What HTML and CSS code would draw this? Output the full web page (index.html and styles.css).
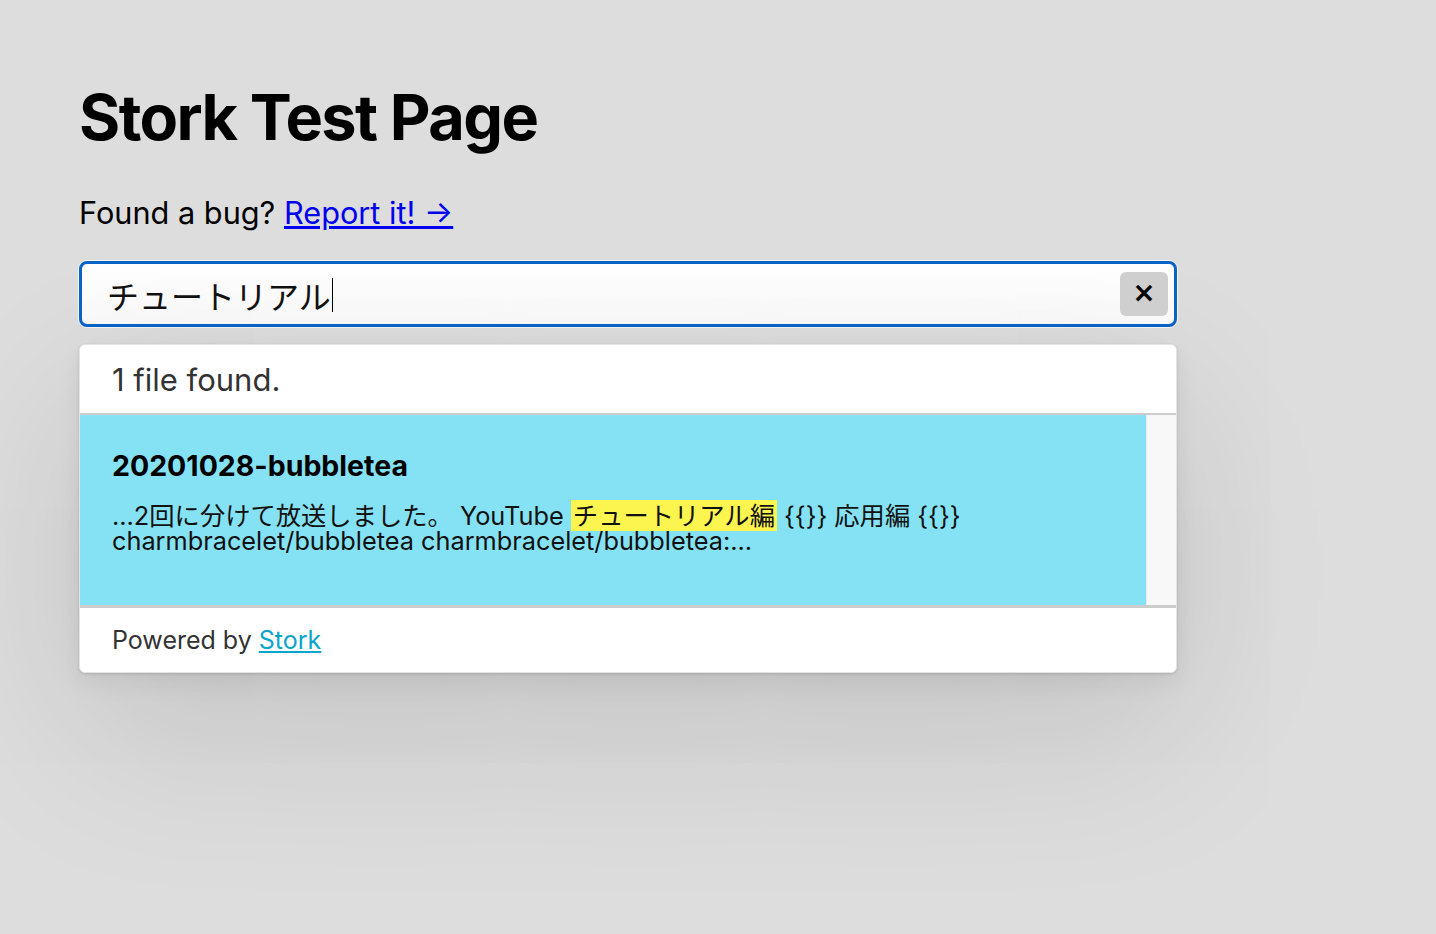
FILE: index.html
```html
<!DOCTYPE html>
<html lang="ja">
<head>
<meta charset="utf-8">
<title>Stork Test Page</title>
<link rel="stylesheet" href="styles.css">
</head>
<body>
<main class="page">
  <h1 class="title">Stork Test Page</h1>
  <p class="bug">Found a bug? <a class="bug-link" href="#">Report it! →</a></p>
  <div class="stork-wrapper">
    <div class="stork-input">
      <span class="input-text">チュートリアル</span><span class="caret"></span>
      <button class="close-button" type="button">×</button>
    </div>
    <div class="stork-output">
      <div class="stork-message">1 file found.</div>
      <div class="stork-results">
        <div class="stork-result">
          <p class="stork-title">20201028-bubbletea</p>
          <p class="stork-excerpt">...2回に分けて放送しました。 YouTube <span class="stork-highlight">チュートリアル編</span> {{}} 応用編 {{}} charmbracelet/bubbletea charmbracelet/bubbletea:...</p>
        </div>
        <div class="scroll-track"></div>
      </div>
      <div class="stork-attribution">Powered by <a class="stork-link" href="#">Stork</a></div>
    </div>
  </div>
</main>
</body>
</html>
```
FILE: styles.css
```css
html, body {
  margin: 0;
  padding: 0;
  background: #dddddd;
}
body {
  min-height: 934px;
  font-family: Inter, "Noto Sans CJK JP", sans-serif;
  color: #000;
}
.page {
  padding: 80px 0 0 79px;
  width: 1098px;
}
.title {
  margin: 0;
  font-size: 63px;
  font-weight: 700;
  line-height: 1.2;
  letter-spacing: -1.6px;
}
.bug {
  margin: 39px 0 0;
  font-size: 30.7px;
  line-height: 1.2;
}
.bug-link {
  color: #0000ee;
}
.stork-wrapper {
  margin-top: 30px;
}
.stork-input {
  box-sizing: border-box;
  height: 66px;
  border: 3px solid #0a64c8;
  border-radius: 8px;
  box-shadow: 0 0 0 1px #f4f4f4;
  background: linear-gradient(to bottom, #ffffff, #fafafa);
  display: flex;
  align-items: center;
  padding: 0 6px 0 25px;
  font-family: "Noto Sans CJK JP", sans-serif;
  font-size: 32px;
  color: #111;
}
.input-text {
  line-height: 1;
  padding-top: 1px;
}
.caret {
  width: 1.5px;
  height: 34px;
  background: #000;
  margin-left: 1px;
  margin-top: 1px;
}
.close-button {
  margin-left: auto;
  width: 48px;
  height: 44px;
  border: 0;
  border-radius: 6px;
  background: #cfcfcf;
  font-family: "DejaVu Sans", sans-serif;
  font-weight: 700;
  font-size: 28px;
  line-height: 1;
  color: #000;
  padding: 0 0 3px;
  display: flex;
  align-items: center;
  justify-content: center;
}
.stork-output {
  margin-top: 17px;
  background: #fff;
  border: 1px solid #e4e4e4;
  border-radius: 6px;
  box-shadow: 0 1px 3px rgba(0,0,0,0.14), 0 10px 24px rgba(0,0,0,0.06), 0 60px 180px rgba(0,0,0,0.12);
  overflow: hidden;
  color: #333;
}
.stork-message {
  height: 68px;
  display: flex;
  align-items: center;
  padding: 0 32px;
  font-size: 31px;
  color: #333;
}
.stork-results {
  display: flex;
  border-top: 2px solid #cccccc;
  border-bottom: 3px solid #cccccc;
}
.stork-result {
  flex: 1;
  height: 190px;
  background: #84e2f4;
  padding: 34px 32px 0;
  box-sizing: border-box;
}
.scroll-track {
  width: 29px;
  background: #f8f8f8;
  border-left: 1px solid #ececec;
}
.stork-title {
  margin: 0;
  font-size: 28.5px;
  font-weight: 700;
  color: #000;
  line-height: 1.2;
}
.stork-excerpt {
  margin: 19px 0 0;
  font-size: 25.3px;
  line-height: 25px;
  color: #111;
  width: 880px;
}
.stork-highlight {
  background: #fdf54f;
  padding: 0 2px;
}
.stork-attribution {
  height: 64px;
  display: flex;
  align-items: center;
  padding: 0 32px;
  font-size: 25px;
  color: #333;
}
.stork-link {
  color: #0aa5cb;
  margin-left: 0.28em;
}
```
